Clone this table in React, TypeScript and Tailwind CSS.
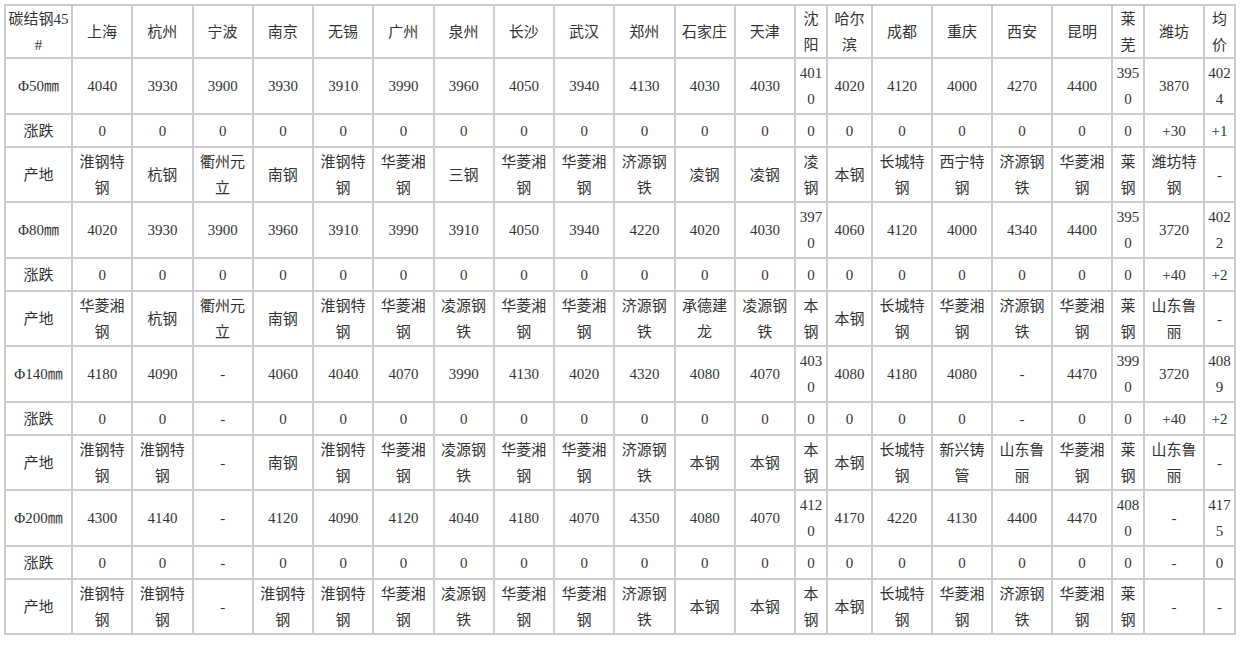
const header = ["碳结钢45#", "上海", "杭州", "宁波", "南京", "无锡", "广州", "泉州", "长沙", "武汉", "郑州", "石家庄", "天津", "沈阳", "哈尔滨", "成都", "重庆", "西安", "昆明", "莱芜", "潍坊", "均价"];

const zeros = (n: number) => Array.from({ length: n }, () => "0");

const groups = [
  {
    size: "Φ50㎜",
    price: ["4040", "3930", "3900", "3930", "3910", "3990", "3960", "4050", "3940", "4130", "4030", "4030", "4010", "4020", "4120", "4000", "4270", "4400", "3950", "3870", "4024"],
    change: [...zeros(19), "+30", "+1"],
    origin: ["淮钢特钢", "杭钢", "衢州元立", "南钢", "淮钢特钢", "华菱湘钢", "三钢", "华菱湘钢", "华菱湘钢", "济源钢铁", "凌钢", "凌钢", "凌钢", "本钢", "长城特钢", "西宁特钢", "济源钢铁", "华菱湘钢", "莱钢", "潍坊特钢", "-"],
  },
  {
    size: "Φ80㎜",
    price: ["4020", "3930", "3900", "3960", "3910", "3990", "3910", "4050", "3940", "4220", "4020", "4030", "3970", "4060", "4120", "4000", "4340", "4400", "3950", "3720", "4022"],
    change: [...zeros(19), "+40", "+2"],
    origin: ["华菱湘钢", "杭钢", "衢州元立", "南钢", "淮钢特钢", "华菱湘钢", "凌源钢铁", "华菱湘钢", "华菱湘钢", "济源钢铁", "承德建龙", "凌源钢铁", "本钢", "本钢", "长城特钢", "华菱湘钢", "济源钢铁", "华菱湘钢", "莱钢", "山东鲁丽", "-"],
  },
  {
    size: "Φ140㎜",
    price: ["4180", "4090", "-", "4060", "4040", "4070", "3990", "4130", "4020", "4320", "4080", "4070", "4030", "4080", "4180", "4080", "-", "4470", "3990", "3720", "4089"],
    change: ["0", "0", "-", "0", "0", "0", "0", "0", "0", "0", "0", "0", "0", "0", "0", "0", "-", "0", "0", "+40", "+2"],
    origin: ["淮钢特钢", "淮钢特钢", "-", "南钢", "淮钢特钢", "华菱湘钢", "凌源钢铁", "华菱湘钢", "华菱湘钢", "济源钢铁", "本钢", "本钢", "本钢", "本钢", "长城特钢", "新兴铸管", "山东鲁丽", "华菱湘钢", "莱钢", "山东鲁丽", "-"],
  },
  {
    size: "Φ200㎜",
    price: ["4300", "4140", "-", "4120", "4090", "4120", "4040", "4180", "4070", "4350", "4080", "4070", "4120", "4170", "4220", "4130", "4400", "4470", "4080", "-", "4175"],
    change: ["0", "0", "-", "0", "0", "0", "0", "0", "0", "0", "0", "0", "0", "0", "0", "0", "0", "0", "0", "-", "0"],
    origin: ["淮钢特钢", "淮钢特钢", "-", "淮钢特钢", "淮钢特钢", "华菱湘钢", "凌源钢铁", "华菱湘钢", "华菱湘钢", "济源钢铁", "本钢", "本钢", "本钢", "本钢", "长城特钢", "华菱湘钢", "济源钢铁", "华菱湘钢", "莱钢", "-", "-"],
  },
];

function Cell({ children }: { children: React.ReactNode }) {
  return (
    <div className="bg-white flex items-center justify-center text-center px-px break-all leading-[26px]">
      {children}
    </div>
  );
}

export default function App() {
  const rows: string[][] = [header];
  for (const g of groups) {
    rows.push([g.size, ...g.price]);
    rows.push(["涨跌", ...g.change]);
    rows.push(["产地", ...g.origin]);
  }

  return (
    <div className="min-h-screen bg-white pt-[4px] pl-[4px] text-[15px] text-[#333] font-['Liberation_Serif','Noto_Sans_CJK_SC',serif]">
      <div className="grid w-fit gap-[2px] p-[2px] bg-[#cccccc] grid-cols-[65px_repeat(12,58.25px)_30px_43px_repeat(4,58px)_30px_58px_29px] grid-rows-[51px_repeat(4,54px_31px_53px)]">
        {rows.map((row, i) =>
          row.map((text, j) => <Cell key={`${i}-${j}`}>{text}</Cell>)
        )}
      </div>
    </div>
  );
}
